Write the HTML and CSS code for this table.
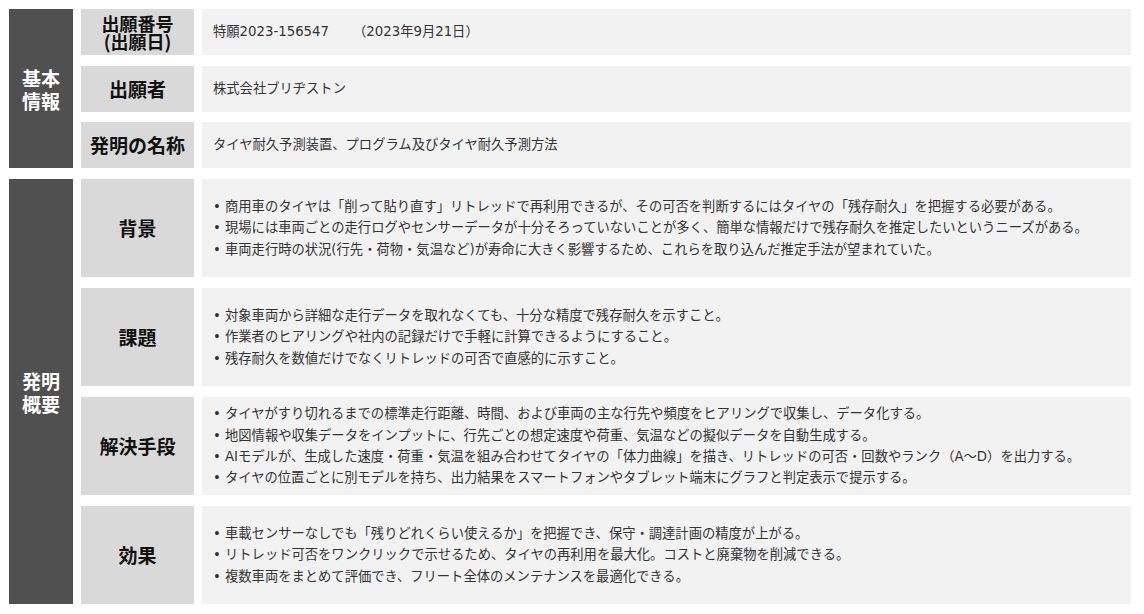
FILE: index.html
```html
<!DOCTYPE html>
<html lang="ja">
<head>
<meta charset="utf-8">
<title>特許概要</title>
<link rel="stylesheet" href="styles.css">
</head>
<body>
<div class="page">
  <section class="sec sec-basic">
    <div class="side"><span>基本<br>情報</span></div>
    <div class="label label-tight">出願番号<br>(出願日)</div>
    <div class="content"><span>特願2023-156547<span class="gap"></span>（2023年9月21日）</span></div>
    <div class="label">出願者</div>
    <div class="content">株式会社ブリヂストン</div>
    <div class="label">発明の名称</div>
    <div class="content">タイヤ耐久予測装置、プログラム及びタイヤ耐久予測方法</div>
  </section>
  <section class="sec sec-summary">
    <div class="side"><span>発明<br>概要</span></div>
    <div class="label">背景</div>
    <div class="content">
      <ul class="list">
        <li>商用車のタイヤは「削って貼り直す」リトレッドで再利用できるが、その可否を判断するにはタイヤの「残存耐久」を把握する必要がある。</li>
        <li>現場には車両ごとの走行ログやセンサーデータが十分そろっていないことが多く、簡単な情報だけで残存耐久を推定したいというニーズがある。</li>
        <li>車両走行時の状況(行先・荷物・気温など)が寿命に大きく影響するため、これらを取り込んだ推定手法が望まれていた。</li>
      </ul>
    </div>
    <div class="label">課題</div>
    <div class="content">
      <ul class="list">
        <li>対象車両から詳細な走行データを取れなくても、十分な精度で残存耐久を示すこと。</li>
        <li>作業者のヒアリングや社内の記録だけで手軽に計算できるようにすること。</li>
        <li>残存耐久を数値だけでなくリトレッドの可否で直感的に示すこと。</li>
      </ul>
    </div>
    <div class="label">解決手段</div>
    <div class="content">
      <ul class="list">
        <li>タイヤがすり切れるまでの標準走行距離、時間、および車両の主な行先や頻度をヒアリングで収集し、データ化する。</li>
        <li>地図情報や収集データをインプットに、行先ごとの想定速度や荷重、気温などの擬似データを自動生成する。</li>
        <li>AIモデルが、生成した速度・荷重・気温を組み合わせてタイヤの「体力曲線」を描き、リトレッドの可否・回数やランク（A～D）を出力する。</li>
        <li>タイヤの位置ごとに別モデルを持ち、出力結果をスマートフォンやタブレット端末にグラフと判定表示で提示する。</li>
      </ul>
    </div>
    <div class="label">効果</div>
    <div class="content">
      <ul class="list">
        <li>車載センサーなしでも「残りどれくらい使えるか」を把握でき、保守・調達計画の精度が上がる。</li>
        <li>リトレッド可否をワンクリックで示せるため、タイヤの再利用を最大化。コストと廃棄物を削減できる。</li>
        <li>複数車両をまとめて評価でき、フリート全体のメンテナンスを最適化できる。</li>
      </ul>
    </div>
  </section>
</div>
</body>
</html>
```
FILE: styles.css
```css
html, body {
  margin: 0;
  padding: 0;
  background: #ffffff;
}
body {
  font-family: "Noto Sans CJK JP", "Noto Sans", sans-serif;
  color: #333333;
}
.page {
  padding: 9px 13px 10px 9px;
  display: flex;
  flex-direction: column;
  gap: 11px;
}
.sec {
  display: grid;
  grid-template-columns: 64px 113px 1fr;
  column-gap: 8px;
}
.sec-basic {
  grid-template-rows: 46px 46px 46px;
  row-gap: 10.5px;
}
.sec-summary {
  grid-template-rows: 98px 98px 98px 98px;
  row-gap: 11px;
}
.side {
  grid-column: 1;
  grid-row: 1 / -1;
  background: #505050;
  color: #ffffff;
  display: flex;
  align-items: center;
  justify-content: center;
  font-weight: 700;
  font-size: 19px;
  line-height: 23px;
  text-align: center;
}
.label {
  grid-column: 2;
  background: #d9d9d9;
  color: #111111;
  font-weight: 700;
  font-size: 19px;
  line-height: 22px;
  display: flex;
  align-items: center;
  justify-content: center;
  text-align: center;
}
.label-tight {
  font-size: 18px;
  line-height: 18px;
}
.content {
  grid-column: 3;
  background: #f2f2f2;
  font-family: "DejaVu Sans", "Noto Sans CJK JP", sans-serif;
  font-size: 13.3px;
  line-height: 21.3px;
  padding: 0 11px;
  display: flex;
  align-items: center;
}
.gap {
  display: inline-block;
  width: 24px;
}
.list {
  list-style: none;
  margin: 0;
  padding: 0;
}
.list li {
  position: relative;
  padding-left: 12px;
}
.list li::before {
  content: "•";
  position: absolute;
  left: 0;
  top: 0;
}
```
